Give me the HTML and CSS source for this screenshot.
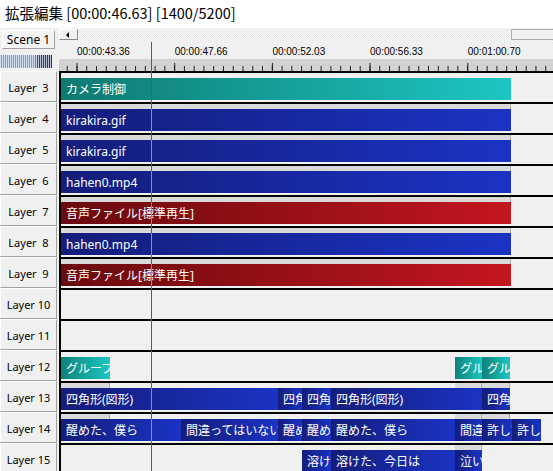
FILE: index.html
```html
<!DOCTYPE html>
<html lang="ja">
<head>
<meta charset="utf-8">
<link rel="stylesheet" href="styles.css">
</head>
<body>
<div class="titlebar">拡張編集 [00:00:46.63] [1400/5200]</div>
<div class="editor">
  <div class="playhead"></div>
  <div class="head">
    <div class="head-left">
      <div class="scene-btn">Scene 1</div>
      <div class="meter"></div>
    </div>
    <div class="head-right">
      <div class="scrollband">
        <div class="arrow-btn"><span class="tri"></span></div>
        <div class="thumb"></div>
      </div>
      <div class="timelabels">
        <span>00:00:43.36</span><span>00:00:47.66</span><span>00:00:52.03</span><span>00:00:56.33</span><span>00:01:00.70</span>
      </div>
      <div class="ruler"></div>
    </div>
  </div>

  <div class="layer">
    <div class="label">Layer  3</div>
    <div class="track">
      <div class="band"></div>
      <div class="clips"><div class="clip teal ph" style="width:450px">カメラ制御</div></div>
    </div>
  </div>
  <div class="layer">
    <div class="label">Layer  4</div>
    <div class="track">
      <div class="band"><span class="edge" style="width:450px"></span></div>
      <div class="clips"><div class="clip blue ph" style="width:450px">kirakira.gif</div></div>
    </div>
  </div>
  <div class="layer">
    <div class="label">Layer  5</div>
    <div class="track">
      <div class="band"><span class="edge" style="width:450px"></span></div>
      <div class="clips"><div class="clip blue ph" style="width:450px">kirakira.gif</div></div>
    </div>
  </div>
  <div class="layer">
    <div class="label">Layer  6</div>
    <div class="track">
      <div class="band"><span class="edge" style="width:450px"></span></div>
      <div class="clips"><div class="clip blue ph" style="width:450px">hahen0.mp4</div></div>
    </div>
  </div>
  <div class="layer">
    <div class="label">Layer  7</div>
    <div class="track">
      <div class="band"><span class="edge" style="width:450px"></span></div>
      <div class="clips"><div class="clip red ph" style="width:450px">音声ファイル[標準再生]</div></div>
    </div>
  </div>
  <div class="layer">
    <div class="label">Layer  8</div>
    <div class="track">
      <div class="band"><span class="edge" style="width:450px"></span></div>
      <div class="clips"><div class="clip blue ph" style="width:450px">hahen0.mp4</div></div>
    </div>
  </div>
  <div class="layer">
    <div class="label">Layer  9</div>
    <div class="track">
      <div class="band"><span class="edge" style="width:450px"></span></div>
      <div class="clips"><div class="clip red ph" style="width:450px">音声ファイル[標準再生]</div></div>
    </div>
  </div>
  <div class="layer">
    <div class="label">Layer 10</div>
    <div class="track"><div class="band"></div><div class="clips"></div></div>
  </div>
  <div class="layer">
    <div class="label">Layer 11</div>
    <div class="track"><div class="band"></div><div class="clips"></div></div>
  </div>
  <div class="layer">
    <div class="label">Layer 12</div>
    <div class="track">
      <div class="band"></div>
      <div class="clips">
        <div class="clip group" style="width:49px">グループ制御</div>
        <div class="clip group" style="margin-left:345px;width:27px">グループ制御</div>
        <div class="clip group" style="width:28px">グループ制御</div>
      </div>
    </div>
  </div>
  <div class="layer">
    <div class="label">Layer 13</div>
    <div class="track">
      <div class="band"><span class="edge" style="width:49px"></span><span class="edge" style="margin-left:345px;width:27px"></span><span class="edge" style="width:28px"></span></div>
      <div class="clips">
        <div class="clip blue ph" style="width:217px">四角形(図形)</div>
        <div class="clip blue" style="width:24px">四角形(図形)</div>
        <div class="clip blue" style="width:29px">四角形(図形)</div>
        <div class="clip blue" style="width:151px">四角形(図形)</div>
        <div class="clip blue" style="width:28px">四角形(図形)</div>
      </div>
    </div>
  </div>
  <div class="layer">
    <div class="label">Layer 14</div>
    <div class="track">
      <div class="band"><span class="edge" style="width:49px"></span><span class="edge" style="margin-left:345px;width:27px"></span><span class="edge" style="width:28px"></span></div>
      <div class="clips">
        <div class="clip blue ph" style="width:120px">醒めた、僕ら</div>
        <div class="clip blue" style="width:97px">間違ってはいないよ</div>
        <div class="clip blue" style="width:24px">醒めた、僕ら</div>
        <div class="clip blue" style="width:29px">醒めた、僕ら</div>
        <div class="clip blue" style="width:124px">醒めた、僕ら</div>
        <div class="clip blue" style="width:27px">間違ってはいないよ</div>
        <div class="clip blue" style="width:30px">許して</div>
        <div class="clip blue" style="width:29px">許して</div>
      </div>
    </div>
  </div>
  <div class="layer">
    <div class="label">Layer 15</div>
    <div class="track">
      <div class="band"><span class="edge" style="margin-left:394px;width:27px"></span></div>
      <div class="clips">
        <div class="clip blue" style="margin-left:241px;width:29px">溶けた、今日は</div>
        <div class="clip blue" style="width:124px">溶けた、今日は</div>
        <div class="clip blue" style="width:27px">泣いて</div>
      </div>
    </div>
  </div>
</div>
</body>
</html>
```

FILE: styles.css
```css
* { box-sizing: border-box; }
html, body { margin: 0; padding: 0; }
body {
  width: 553px;
  height: 471px;
  overflow: hidden;
  background: #f0f0f0;
  font-family: "Noto Sans", "Noto Sans CJK JP", sans-serif;
  color: #000;
}
.titlebar {
  height: 28px;
  background: #fff;
  padding-left: 5px;
  font-family: "Noto Sans CJK JP", sans-serif;
  font-size: 14.5px;
  line-height: 26px;
  white-space: nowrap;
}
.editor { position: relative; }
.playhead {
  position: absolute;
  left: 150.5px;
  top: 14px;
  bottom: 0;
  width: 1.5px;
  background: #ee1c1c;
}
.head {
  display: grid;
  grid-template-columns: 59px 1fr;
  height: 43px;
}
.head-left { padding-top: 2px; }
.scene-btn {
  margin-left: 2px;
  width: 53px;
  height: 19px;
  border: 1px solid;
  border-color: #fff #a0a0a0 #a0a0a0 #fff;
  background: #f4f4f4;
  font-size: 12px;
  line-height: 17px;
  text-align: center;
}
.meter {
  margin-top: 6px;
  width: 52px;
  height: 13px;
  background:
    repeating-linear-gradient(90deg, rgba(240,240,240,0.75) 0 1px, transparent 1px 2px),
    linear-gradient(90deg, #6fa3e2 0, #6fa3e2 66%, #27448c 74%, #1c3478 100%);
}
.head-right { display: flex; flex-direction: column; }
.scrollband {
  height: 15px;
  display: flex;
  justify-content: space-between;
  align-items: flex-start;
  padding-top: 1px;
  background: repeating-conic-gradient(#e4e4e4 0 25%, #fcfcfc 0 50%) 0 0 / 2px 2px;
}
.arrow-btn {
  width: 19px;
  height: 11px;
  border: 1px solid;
  border-color: #fff #8a8a8a #8a8a8a #fff;
  background: #f0f0f0;
  display: flex;
  align-items: center;
  padding-left: 6px;
}
.tri {
  width: 0;
  height: 0;
  border-top: 3px solid transparent;
  border-bottom: 3px solid transparent;
  border-right: 3px solid #000;
}
.thumb {
  width: 54px;
  height: 11px;
  border: 1px solid #adadad;
  border-right: none;
  background: #f0f0f0;
}
.timelabels {
  height: 16px;
  display: flex;
  padding-left: 18px;
  font-family: "Liberation Sans", sans-serif;
  font-size: 10px;
  line-height: 17px;
  white-space: nowrap;
}
.timelabels span { flex: none; width: 97.7px; }
.ruler {
  height: 12px;
  background-color: #d2d2d2;
  background-image:
    linear-gradient(90deg, #1a1a1a 1px, transparent 1px),
    linear-gradient(90deg, #1a1a1a 1px, transparent 1px);
  background-size: 97.7px 8px, 9.77px 5px;
  background-position: 17.5px 100%, 7.73px 100%;
  background-repeat: repeat-x;
}
.layer {
  display: grid;
  grid-template-columns: 59px 1fr;
  height: 31px;
}
.label {
  width: 57px;
  height: 31px;
  border: 1px solid;
  border-color: #fff #a0a0a0 #a0a0a0 #fff;
  display: flex;
  align-items: center;
  justify-content: center;
  font-size: 11px;
  white-space: pre;
  padding-top: 1px;
}
.track {
  border-top: 2px solid #000;
  border-left: 2px solid #000;
  display: flex;
  flex-direction: column;
  min-width: 0;
}
.band { height: 5px; display: flex; flex: none; }
.band span { flex: none; height: 5px; background: #d9d9d9; }
.band span.edge { border-right: 1px solid #b0b0b0; }
.clips { height: 22px; display: flex; flex: none; }
.clip {
  position: relative;
  flex: none;
  height: 22px;
  padding-left: 5px;
  overflow: hidden;
  white-space: nowrap;
  color: #fff;
  font-family: "Noto Sans", "Noto Sans CJK JP", sans-serif;
  font-size: 12px;
  line-height: 23px;
}
.blue { background: linear-gradient(90deg, #141d7a, #1a33c4); }
.red { background: linear-gradient(90deg, #690a0e, #c4161e); }
.teal { background: linear-gradient(90deg, #0e7a72, #1dc6c3); }
.group { background: linear-gradient(90deg, #0d827a, #1cc6c2); }
.ph::after {
  content: "";
  position: absolute;
  left: 89.5px;
  top: 0;
  bottom: 0;
  width: 1.5px;
  background: #3cb4c6;
}
.red.ph::after { background: #3cb0b0; }
.teal.ph::after { background: #1a7a70; }
```
